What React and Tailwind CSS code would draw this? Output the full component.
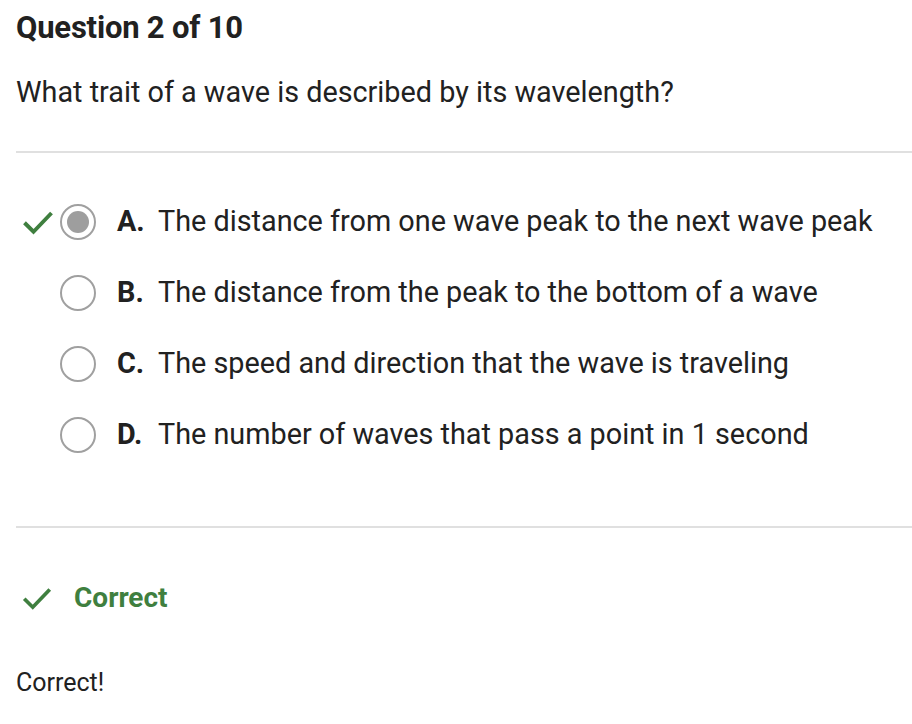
const options = [
  { letter: "A.", text: "The distance from one wave peak to the next wave peak", selected: true },
  { letter: "B.", text: "The distance from the peak to the bottom of a wave" },
  { letter: "C.", text: "The speed and direction that the wave is traveling" },
  { letter: "D.", text: "The number of waves that pass a point in 1 second" },
];

const Check = ({ className }) => (
  <svg className={className} viewBox="0 0 24 24" fill="none" stroke="currentColor" strokeWidth={2.6} strokeLinecap="butt" strokeLinejoin="miter">
    <polyline points="3,12.5 9,18.5 21,6" />
  </svg>
);

export default function App() {
  return (
    <div className="bg-white min-h-screen w-[912px] text-[#212121] font-['Roboto',sans-serif]">
      <div className="pl-4 pt-[9px]">
        <h1 className="text-[31px] font-bold leading-[38px] tracking-[-0.2px]">Question 2 of 10</h1>
        <p className="mt-[28px] text-[28.8px] leading-[34px]">What trait of a wave is described by its wavelength?</p>
      </div>

      <div className="ml-4 mt-[42px] border-t-2 border-[#e0e0e0]" />

      <ul className="mt-[51px] flex flex-col gap-[35px]">
        {options.map((o) => (
          <li key={o.letter} className="flex items-center h-[36px]">
            <div className="w-[60px] flex justify-end pr-[4px]">
              {o.selected && <Check className="w-[36px] h-[36px] text-[#3f7f3f]" />}
            </div>
            <div className="w-[36px] h-[36px] rounded-full border-2 border-[#a0a0a0] flex items-center justify-center shrink-0">
              {o.selected && <div className="w-[22px] h-[22px] rounded-full bg-[#9e9e9e]" />}
            </div>
            <span className="ml-[21px] text-[28.8px] font-bold w-[41px]">{o.letter}</span>
            <span className="text-[28.8px]">{o.text}</span>
          </li>
        ))}
      </ul>

      <div className="ml-4 mt-[73px] border-t-2 border-[#e0e0e0]" />

      <div className="mt-[53px] flex items-center pl-[20px] h-[34px]">
        <Check className="w-[34px] h-[34px] text-[#3f7f3f]" />
        <span className="ml-[20px] text-[28px] font-bold text-[#3f7f3f]">Correct</span>
      </div>

      <p className="pl-4 mt-[53px] text-[25px] leading-[30px]">Correct!</p>
    </div>
  );
}
